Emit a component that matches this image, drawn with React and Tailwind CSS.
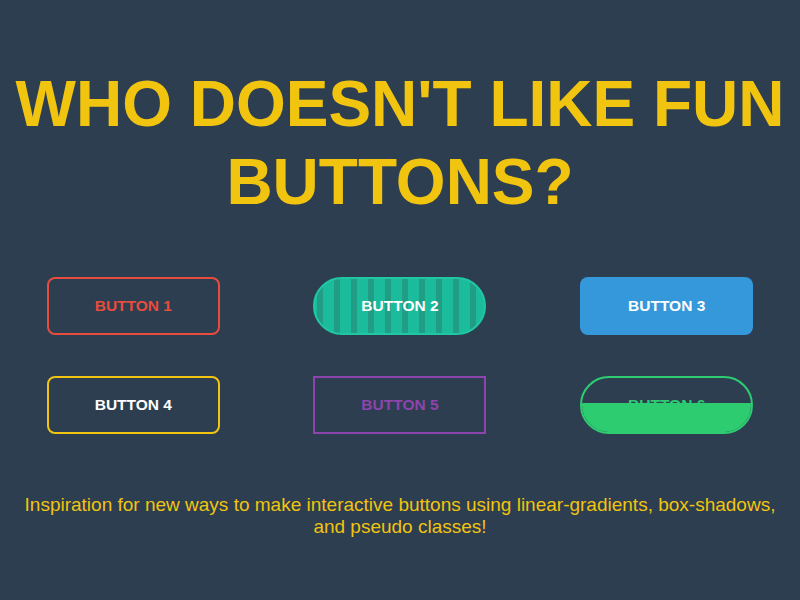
import React from 'react';

const base =
  'relative mx-auto flex h-[58px] w-[173px] items-center justify-center overflow-hidden text-[15.5px] font-bold uppercase';

const App = () => {
  return (
    <div className="min-h-screen bg-[#2c3e50] text-center font-['Liberation_Sans',Arial,sans-serif]">
      <h1 className="pt-[65px] text-[64px] font-bold leading-[78px] text-[#f1c40f]">
        WHO DOESN'T LIKE FUN BUTTONS?
      </h1>

      <div className="mt-[56px] grid grid-cols-3 gap-y-[41px]">
        <button className={`${base} rounded-lg border-2 border-[#e74c3c] text-[#e74c3c]`}>
          Button 1
        </button>

        <button
          className={`${base} rounded-full border-2 border-[#1fc7a4] text-white bg-[#1abc9c] bg-[repeating-linear-gradient(90deg,#1abc9c_0px,#1abc9c_2px,#229d85_2px,#229d85_8px,#1abc9c_8px,#1abc9c_17px)]`}
        >
          Button 2
        </button>

        <button className={`${base} rounded-lg bg-[#3498db] text-white`}>
          Button 3
        </button>

        <button className={`${base} rounded-lg border-2 border-[#f1c40f] text-white`}>
          Button 4
        </button>

        <button className={`${base} border-2 border-[#8e44ad] text-[#8e44ad]`}>
          Button 5
        </button>

        <button className={`${base} rounded-full border-2 border-[#2ecc71] text-[#2ecc71]`}>
          <span>Button 6</span>
          <span className="absolute inset-x-0 bottom-0 h-[29px] bg-[#2ecc71]" />
        </button>
      </div>

      <p className="mx-auto mt-[60px] px-4 text-[19px] leading-[22px] text-[#f1c40f]">
        Inspiration for new ways to make interactive buttons using linear-gradients, box-shadows,
        and pseudo classes!
      </p>
    </div>
  );
};

export default App;
